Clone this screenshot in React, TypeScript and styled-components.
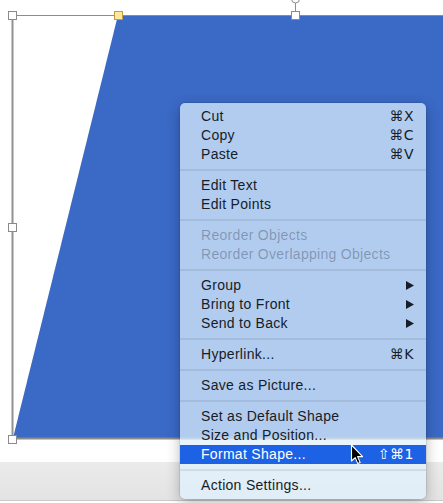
import React from "react";
import styled, { createGlobalStyle } from "styled-components";

const GlobalStyle = createGlobalStyle`
  html, body {
    margin: 0;
    padding: 0;
    background: #ffffff;
  }
  body {
    font-family: "Liberation Sans", "DejaVu Sans", Arial, sans-serif;
  }
`;

const Window = styled.div`
  position: relative;
  width: 443px;
  height: 503px;
  overflow: hidden;
  background: #ffffff;
  display: flex;
  flex-direction: column;
`;

const Canvas = styled.div`
  height: 462px;
  flex: none;
  background: #ffffff;
`;

const StatusBar = styled.div`
  height: 38px;
  flex: none;
  background: linear-gradient(#ebebeb, #e3e3e3);
  border-bottom: 1px solid #c9c9c9;
`;

const Menu = styled.div`
  position: absolute;
  left: 180px;
  top: 103px;
  width: 246px;
  padding: 4px 0;
  border-radius: 5px;
  background: rgba(224, 241, 253, 0.73);
  box-shadow: 0 4px 14px rgba(0, 0, 0, 0.28), 0 0 0 0.5px rgba(0, 0, 0, 0.15);
  font-family: "Liberation Sans", "DejaVu Sans", Arial, sans-serif;
  font-size: 14px;
  letter-spacing: 0.3px;
`;

const Row = styled.div<{ $active?: boolean; $disabled?: boolean }>`
  display: flex;
  align-items: center;
  height: 19px;
  line-height: 19px;
  padding: 0 12px 0 21px;
  color: ${(p) =>
    p.$active ? "#ffffff" : p.$disabled ? "rgba(20, 30, 50, 0.32)" : "#161c28"};
  background: ${(p) => (p.$active ? "#1d62e5" : "transparent")};
  white-space: nowrap;
`;

const Label = styled.span`
  flex: 1;
`;

const Shortcut = styled.span`
  font-family: "DejaVu Sans", "Liberation Sans", sans-serif;
  font-size: 14px;
  letter-spacing: 0.5px;
`;

const Separator = styled.div`
  height: 2px;
  margin: 5px 0;
  background: rgba(0, 0, 0, 0.08);
`;

const Cursor = styled.svg`
  position: absolute;
  left: 350px;
  top: 444px;
`;

type Item =
  | { sep: true }
  | {
      sep?: false;
      label: string;
      shortcut?: string;
      submenu?: boolean;
      disabled?: boolean;
      active?: boolean;
    };

const items: Item[] = [
  { label: "Cut", shortcut: "⌘X" },
  { label: "Copy", shortcut: "⌘C" },
  { label: "Paste", shortcut: "⌘V" },
  { sep: true },
  { label: "Edit Text" },
  { label: "Edit Points" },
  { sep: true },
  { label: "Reorder Objects", disabled: true },
  { label: "Reorder Overlapping Objects", disabled: true },
  { sep: true },
  { label: "Group", submenu: true },
  { label: "Bring to Front", submenu: true },
  { label: "Send to Back", submenu: true },
  { sep: true },
  { label: "Hyperlink...", shortcut: "⌘K" },
  { sep: true },
  { label: "Save as Picture..." },
  { sep: true },
  { label: "Set as Default Shape" },
  { label: "Size and Position..." },
  { label: "Format Shape...", shortcut: "⇧⌘1", active: true },
  { sep: true },
  { label: "Action Settings..." },
];

const SubArrow = () => (
  <svg width="8" height="9" viewBox="0 0 8 9">
    <path d="M0 0 L8 4.5 L0 9 Z" fill="#161c28" />
  </svg>
);

const Handle = ({ x, y, fill = "#ffffff", stroke = "#8a8a8a" }: { x: number; y: number; fill?: string; stroke?: string }) => (
  <rect x={x - 4} y={y - 4} width="8" height="8" fill={fill} stroke={stroke} strokeWidth="1" />
);

const ShapeDrawing = () => (
  <svg width="443" height="462" viewBox="0 0 443 462" style={{ display: "block" }}>
    <polygon points="118,15 450,15 450,438 13,438" fill="#3a69c6" />
    <line x1="12" y1="15.5" x2="443" y2="15.5" stroke="#8c8c8c" strokeWidth="1.2" />
    <line x1="12" y1="438.5" x2="443" y2="438.5" stroke="#8c8c8c" strokeWidth="2" />
    <line x1="12.5" y1="15" x2="12.5" y2="439" stroke="#929292" strokeWidth="2" />
    <line x1="295.5" y1="0" x2="295.5" y2="12" stroke="#8c8c8c" strokeWidth="1" />
    <circle cx="295.5" cy="-1" r="4" fill="#ffffff" stroke="#8c8c8c" strokeWidth="1" />
    <Handle x={12.5} y={15.5} />
    <Handle x={295.5} y={15.5} />
    <Handle x={12.5} y={227.5} />
    <Handle x={12.5} y={439.5} />
    <Handle x={118.5} y={15.5} fill="#fde99c" stroke="#c49a3e" />
  </svg>
);

export default function App() {
  return (
    <>
      <GlobalStyle />
      <Window>
        <Canvas>
          <ShapeDrawing />
        </Canvas>
        <StatusBar />
        <Menu>
          {items.map((it, i) =>
            it.sep ? (
              <Separator key={i} />
            ) : (
              <Row key={i} $active={it.active} $disabled={it.disabled}>
                <Label>{it.label}</Label>
                {it.shortcut && <Shortcut>{it.shortcut}</Shortcut>}
                {it.submenu && <SubArrow />}
              </Row>
            )
          )}
        </Menu>
        <Cursor width="14" height="22" viewBox="0 0 14 22">
          <path
            d="M1.5 1 L1.5 17 L5.2 13.6 L7.8 19.6 L10.2 18.6 L7.6 12.6 L12.6 12.6 Z"
            fill="#000000"
            stroke="#ffffff"
            strokeWidth="1.1"
            strokeLinejoin="round"
          />
        </Cursor>
      </Window>
    </>
  );
}
